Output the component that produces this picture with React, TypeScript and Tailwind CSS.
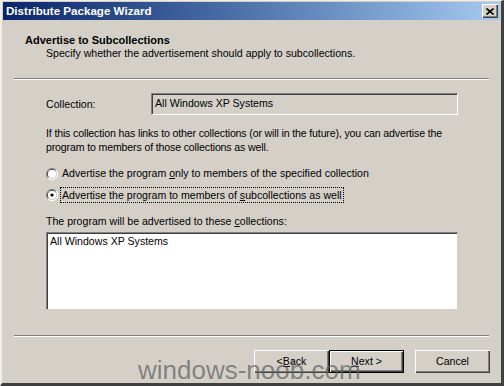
import React from "react";

const font = { fontFamily: '"Liberation Sans", Arial, sans-serif' };

function Radio({ checked }: { checked?: boolean }) {
  return (
    <svg width="12" height="12" viewBox="0 0 12 12" className="shrink-0">
      <path d="M10 2 A5.5 5.5 0 0 0 2 10" stroke="#808080" fill="none" />
      <path d="M9.2 2.8 A4.5 4.5 0 0 0 2.8 9.2" stroke="#404040" fill="none" />
      <path d="M2 10 A5.5 5.5 0 0 0 10 2" stroke="#ffffff" fill="none" />
      <path d="M2.8 9.2 A4.5 4.5 0 0 0 9.2 2.8" stroke="#d4d0c8" fill="none" />
      <circle cx="6" cy="6" r="4" fill="#ffffff" />
      {checked && <circle cx="6" cy="6" r="1.6" fill="#000000" />}
    </svg>
  );
}

function Button({ children, def }: { children: React.ReactNode; def?: boolean }) {
  return (
    <div
      className={
        "w-[75px] h-[23px] flex items-center justify-center text-[10.6px] text-black bg-[#d4d0c8] " +
        (def
          ? "border border-black shadow-[inset_1px_1px_0_#ffffff,inset_-1px_-1px_0_#404040,inset_-2px_-2px_0_#808080]"
          : "shadow-[inset_1px_1px_0_#ffffff,inset_-1px_-1px_0_#404040,inset_-2px_-2px_0_#808080]")
      }
    >
      {children}
    </div>
  );
}

export default function App() {
  return (
    <div
      className="relative w-[504px] h-[386px] bg-[#d4d0c8] overflow-hidden border-l-2 border-t border-r-[3px] border-b-[3px] border-l-[#f0eee8] border-t-[#f0eee8] border-r-[#404040] border-b-[#404040]"
      style={font}
    >
      {/* title bar */}
      <div className="mx-[1px] mt-[1px] h-[18px] flex items-center justify-between pl-[3px] pr-[2px] bg-gradient-to-r from-[#0a246a] to-[#a6caf0]">
        <span className="text-white font-bold text-[11.6px]">Distribute Package Wizard</span>
        <div className="w-[16px] h-[14px] bg-[#d4d0c8] flex items-center justify-center shadow-[inset_1px_1px_0_#ffffff,inset_-1px_-1px_0_#404040,inset_-2px_-2px_0_#808080]">
          <svg width="8" height="7" viewBox="0 0 8 7">
            <path d="M0.5 0.5 L7.5 6.5 M7.5 0.5 L0.5 6.5" stroke="#000" strokeWidth="1.6" />
          </svg>
        </div>
      </div>

      {/* header */}
      <div className="h-[58px] pt-[13px] pl-[23px]">
        <div className="font-bold text-[11px] text-black leading-[14px]">Advertise to Subcollections</div>
        <div className="text-[10.6px] text-black leading-[13px] pl-[21px]">
          Specify whether the advertisement should apply to subcollections.
        </div>
      </div>
      <div className="mx-[12px] h-[2px] border-t border-t-[#808080] border-b border-b-white" />

      {/* content */}
      <div className="pl-[44px] pr-[43px] pt-[13px] text-[10.6px] text-black">
        <div className="flex items-center h-[22px]">
          <span className="w-[105px] pt-[2px]">Collection:</span>
          <div className="flex-1 h-[22px] pl-[3px] pt-[3px] leading-[13px] border border-t-[#808080] border-l-[#808080] border-r-white border-b-white shadow-[inset_1px_1px_0_#404040]">
            All Windows XP Systems
          </div>
        </div>

        <p className="mt-[11px] leading-[14px] tracking-[-0.15px]">
          If this collection has links to other collections (or will in the future), you can advertise the program to members of those collections as well.
        </p>

        <div className="mt-[12px] flex flex-col gap-[6px]">
          <div className="flex items-center gap-[4px] h-[15px]">
            <Radio />
            <span>
              Advertise the program <u>o</u>nly to members of the specified collection
            </span>
          </div>
          <div className="flex items-center gap-[3px] h-[15px]">
            <Radio checked />
            <span className="px-[1px] outline outline-1 outline-dotted outline-black leading-[14px]">
              Advertise the program to members of <u>s</u>ubcollections as well
            </span>
          </div>
        </div>

        <div className="mt-[13px] leading-[13px]">
          The program will be advertised to these <u>c</u>ollections:
        </div>
        <div className="mt-[4px] h-[78px] bg-white pl-[3px] pt-[2px] leading-[13px] border border-t-[#808080] border-l-[#808080] border-r-[#d4d0c8] border-b-[#d4d0c8] shadow-[inset_1px_1px_0_#404040]">
          All Windows XP Systems
        </div>
      </div>

      <div className="mx-[12px] mt-[25px] h-[2px] border-t border-t-[#808080] border-b border-b-white" />

      {/* buttons */}
      <div className="flex justify-end pr-[11px] pt-[13px]">
        <Button>
          &lt; <u>B</u>ack
        </Button>
        <Button def>
          <u>N</u>ext &gt;
        </Button>
        <div className="w-[11px]" />
        <Button>Cancel</Button>
      </div>

      {/* watermark */}
      <div className="absolute left-[136px] top-[354px] text-[26px] leading-[30px] text-[#5e5e5e]/70 pointer-events-none">
        windows-noob.com
      </div>
    </div>
  );
}
